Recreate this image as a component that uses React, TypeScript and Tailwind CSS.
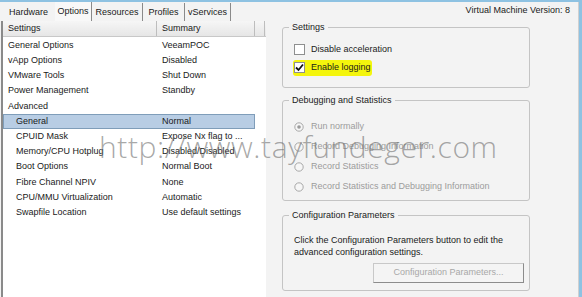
import React from "react"

const font = { fontFamily: '"Liberation Sans", Arial, sans-serif' }

const rows: { label: string; summary: string; indent?: boolean; selected?: boolean }[] = [
  { label: "General Options", summary: "VeeamPOC" },
  { label: "vApp Options", summary: "Disabled" },
  { label: "VMware Tools", summary: "Shut Down" },
  { label: "Power Management", summary: "Standby" },
  { label: "Advanced", summary: "" },
  { label: "General", summary: "Normal", indent: true, selected: true },
  { label: "CPUID Mask", summary: "Expose Nx flag to ...", indent: true },
  { label: "Memory/CPU Hotplug", summary: "Disabled/Disabled", indent: true },
  { label: "Boot Options", summary: "Normal Boot", indent: true },
  { label: "Fibre Channel NPIV", summary: "None", indent: true },
  { label: "CPU/MMU Virtualization", summary: "Automatic", indent: true },
  { label: "Swapfile Location", summary: "Use default settings", indent: true },
]

const tabs = [
  { name: "Hardware", w: "w-[53px]" },
  { name: "Options", w: "w-[37px]", active: true },
  { name: "Resources", w: "w-[51px]" },
  { name: "Profiles", w: "w-[42px]" },
  { name: "vServices", w: "w-[46px]" },
]

function Checkbox({ checked }: { checked?: boolean }) {
  return (
    <span className="flex h-[11px] w-[11px] items-center justify-center border border-[#8e8f8f] bg-white">
      {checked && (
        <svg width="9" height="9" viewBox="0 0 9 9">
          <path d="M1 4.5 L3.5 7 L8 1.5" fill="none" stroke="#111" strokeWidth="1.8" />
        </svg>
      )}
    </span>
  )
}

function Radio({ on }: { on?: boolean }) {
  return (
    <svg width="10" height="10" viewBox="0 0 10 10">
      <circle cx="5" cy="5" r="4.2" fill="#f6f6f6" stroke="#a8a8a8" strokeWidth="1" />
      {on && <circle cx="5" cy="5" r="1.8" fill="#9a9a9a" />}
    </svg>
  )
}

function Group({ title, className, children }: { title: string; className: string; children: React.ReactNode }) {
  return (
    <div className={`flex flex-col rounded-[3px] border border-[#c4c4c4] ${className}`}>
      <span className="-mt-[7px] ml-[6px] block w-fit bg-[#f3f3f3] px-[3px] leading-[13px] text-[#1a1a1a]">
        {title}
      </span>
      {children}
    </div>
  )
}

export default function App() {
  return (
    <div
      className="relative flex h-[297px] w-[582px] overflow-hidden border-t-[2px] border-r-[3px] border-[#8ec2e2] bg-[#f3f3f3] text-[9px] text-[#1a1a1a]"
      style={font}
    >
      {/* left: tabs + settings list */}
      <div className="flex w-[266px] flex-col">
        <div className="flex h-[19px] items-end pl-[2px]">
          {tabs.map((t) => (
            <div
              key={t.name}
              className={`flex h-[18px] items-center justify-center border-r border-[#8a8a8a] ${t.w} ${
                t.active ? "h-[19px] items-start bg-[#f8f8f8] pt-[3px]" : "pt-[2px]"
              } ${t.name === "Hardware" ? "border-r-0" : ""}`}
            >
              {t.name}
            </div>
          ))}
        </div>

        <div className="ml-[1px] flex flex-1 flex-col border-l-[2px] border-[#8a8a8a] bg-white">
          <div className="flex h-[16px] border-b border-[#c8c8c8] bg-gradient-to-b from-[#f6f6f6] to-[#e6e6e6]">
            <div className="flex w-[154px] items-center border-r border-[#bdbdbd] pl-[5px]">Settings</div>
            <div className="flex w-[98px] items-center border-r border-[#bdbdbd] pl-[5px]">Summary</div>
            <div className="w-[10px] border-r border-[#bdbdbd]" />
          </div>
          <div className="flex flex-col pt-[1px] pr-[11px]">
            {rows.map((r) => (
              <div
                key={r.label}
                className={`flex h-[15.2px] items-center ${
                  r.selected ? "border border-[#7f9db9] bg-[#b8cde4]" : "border border-transparent"
                }`}
              >
                <span className={`w-[154px] ${r.indent ? "pl-[12px]" : "pl-[4px]"}`}>{r.label}</span>
                <span className="pl-[4px]">{r.summary}</span>
              </div>
            ))}
          </div>
        </div>
      </div>

      {/* right: options for the selected item */}
      <div className="flex flex-1 flex-col border-r border-[#d0d0d0] pl-[16px]">
        <div className="flex h-[18px] items-center justify-end pr-[8px]">Virtual Machine Version: 8</div>

        <Group title="Settings" className="mt-[7px] h-[61px] w-[248px]">
          <div className="mt-[9px] ml-[11px] flex items-center gap-[6px]">
            <Checkbox />
            <span>Disable acceleration</span>
          </div>
          <div className="mt-[3px] ml-[10px] flex h-[16px] w-[79px] items-center gap-[6px] rounded-[3px] bg-[#f4f50c] pl-[1px]">
            <Checkbox checked />
            <span>Enable logging</span>
          </div>
        </Group>

        <Group title="Debugging and Statistics" className="mt-[12px] h-[101px] w-[248px] text-[#a0a0a0]">
          <div className="mt-[15px] ml-[11px] flex flex-col gap-[10px] text-[#9c9c9c]">
            {[
              ["Run normally", true],
              ["Record Debugging Information", false],
              ["Record Statistics", false],
              ["Record Statistics and Debugging Information", false],
            ].map(([label, on]) => (
              <div key={label as string} className="flex h-[10px] items-center gap-[7px]">
                <Radio on={on as boolean} />
                <span>{label}</span>
              </div>
            ))}
          </div>
        </Group>

        <Group title="Configuration Parameters" className="mt-[14px] h-[76px] w-[248px]">
          <p className="mt-[12px] ml-[11px] leading-[12px]">
            Click the Configuration Parameters button to edit the
            <br />
            advanced configuration settings.
          </p>
          <div className="mt-[5px] mr-[5px] flex justify-end">
            <button className="flex h-[20px] w-[151px] items-center justify-center border border-[#c8c8c8] border-r-[#8c8c8c] border-b-[#8c8c8c] bg-[#f4f4f4] text-[#a8a8a8]">
              Configuration Parameters...
            </button>
          </div>
        </Group>
      </div>

      {/* watermark over the dialog */}
      <div
        className="pointer-events-none absolute top-[122px] left-[99px] text-[30px] font-light tracking-[0.6px] text-[#6e6e6e]/60"
        style={{ fontFamily: '"Open Sans", "Liberation Sans", sans-serif' }}
      >
        http://www.tayfundeger.com
      </div>
    </div>
  )
}
